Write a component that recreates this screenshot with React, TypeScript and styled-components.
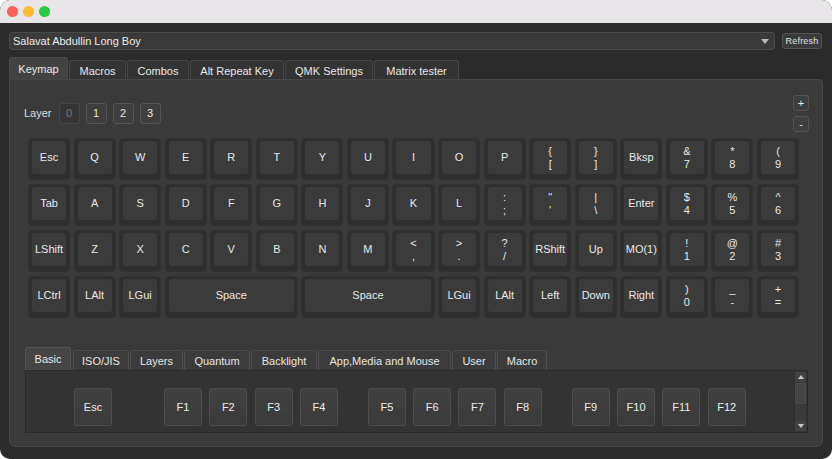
import React from "react";
import styled, { createGlobalStyle } from "styled-components";

const Global = createGlobalStyle`
  html, body { margin: 0; padding: 0; background: #ffffff; }
  body { font-family: "Liberation Sans", Arial, sans-serif; }
  #root { width: 832px; height: 459px; }
  * { box-sizing: border-box; }
`;

const Window = styled.div`
  width: 832px;
  height: 459px;
  border-radius: 10px;
  overflow: hidden;
  background: #2b2b2b;
  display: flex;
  flex-direction: column;
  color: #e6e6e6;
  font-size: 11px;
`;

const TitleBar = styled.div`
  height: 23px;
  flex: none;
  background: #e8e6e8;
  display: flex;
  align-items: center;
  gap: 5px;
  padding-left: 7px;
  padding-bottom: 1px;
`;

const Light = styled.span<{ $c: string }>`
  width: 11px;
  height: 11px;
  border-radius: 50%;
  background: ${(p) => p.$c};
`;

const Body = styled.div`
  flex: 1;
  display: flex;
  flex-direction: column;
  padding: 9px 9px 12px 9px;
  min-height: 0;
`;

const TopRow = styled.div`
  display: flex;
  align-items: center;
  gap: 7px;
  height: 18px;
  flex: none;
`;

const Combo = styled.div`
  flex: 1;
  height: 18px;
  background: #3a3a3a;
  border: 1px solid #4c4c4c;
  border-radius: 3px;
  display: flex;
  align-items: center;
  justify-content: space-between;
  padding: 0 4px 0 3px;
  font-size: 11px;
  color: #ececec;
`;

const Caret = styled.span`
  width: 0;
  height: 0;
  border-left: 4px solid transparent;
  border-right: 4px solid transparent;
  border-top: 5px solid #b8b8b8;
  margin-right: 1px;
`;

const SmallButton = styled.div`
  width: 40px;
  height: 16px;
  margin-right: 1px;
  background: #3b3b3b;
  border: 1px solid #555;
  border-radius: 3px;
  font-size: 9px;
  display: flex;
  align-items: center;
  justify-content: center;
  color: #e2e2e2;
  letter-spacing: 0.2px;
`;

const TabBar = styled.div`
  display: flex;
  align-items: flex-end;
  height: 22px;
  margin-top: 7px;
  flex: none;
`;

const Tab = styled.div<{ $w: number; $active?: boolean }>`
  width: ${(p) => p.$w}px;
  height: ${(p) => (p.$active ? 22 : 19)}px;
  margin-right: 1px;
  background: ${(p) => (p.$active ? "#424242" : "#333333")};
  border: 1px solid ${(p) => (p.$active ? "#4a4a4a" : "#474747")};
  border-bottom: none;
  border-radius: 3px 3px 0 0;
  display: flex;
  align-items: center;
  justify-content: center;
  font-size: 11px;
  color: #e8e8e8;
  padding-top: ${(p) => (p.$active ? 0 : 1)}px;
`;

const Pane = styled.div`
  flex: 1;
  background: #3a3a3a;
  border: 1px solid #474747;
  border-radius: 0 4px 6px 6px;
  display: flex;
  flex-direction: column;
  padding: 15px 14px 13px 14px;
  min-height: 0;
`;

const Header = styled.div`
  display: flex;
  align-items: center;
  justify-content: space-between;
  height: 37px;
`;

const LayerRow = styled.div`
  display: flex;
  align-items: center;
  gap: 6px;
  margin-top: -1px;
`;

const LayerLabel = styled.span`
  font-size: 11px;
  color: #dcdcdc;
  margin-right: 1px;
`;

const LayerButton = styled.div<{ $current?: boolean }>`
  width: 21px;
  height: 21px;
  border-radius: 3px;
  background: ${(p) => (p.$current ? "#353535" : "#3e3e3e")};
  border: 1px solid ${(p) => (p.$current ? "#474747" : "#555555")};
  color: ${(p) => (p.$current ? "#7a7a7a" : "#e6e6e6")};
  display: flex;
  align-items: center;
  justify-content: center;
  font-size: 11px;
`;

const SizeColumn = styled.div`
  display: flex;
  flex-direction: column;
  gap: 5px;
  margin-right: -1px;
`;

const SizeButton = styled.div`
  width: 16px;
  height: 16px;
  border-radius: 3px;
  background: #3e3e3e;
  border: 1px solid #555;
  display: flex;
  align-items: center;
  justify-content: center;
  font-size: 11px;
  color: #e6e6e6;
  line-height: 1;
`;

const Keyboard = styled.div`
  margin: 6px 0 0 4px;
  width: 771px;
  display: grid;
  grid-template-columns: repeat(17, 1fr);
  grid-auto-rows: 42px;
  column-gap: 3.56px;
  row-gap: 4px;
`;

const KeyCap = styled.div<{ $span: number }>`
  grid-column: span ${(p) => p.$span};
  background: #2e2e2e;
  border: 1px solid #313131;
  border-radius: 4px;
  padding: 2px 3px 5px 3px;
  display: flex;
`;

const KeyFace = styled.div`
  flex: 1;
  background: #3b3b3b;
  border-radius: 3px;
  display: flex;
  flex-direction: column;
  align-items: center;
  justify-content: center;
  font-size: 11px;
  line-height: 13px;
  color: #e9e9e9;
  white-space: pre;
  text-align: center;
`;

const Lower = styled.div`
  margin: 29px 0 0 1px;
  display: flex;
  flex-direction: column;
  flex: 1;
  min-height: 0;
`;

const LowerTabBar = styled.div`
  display: flex;
  align-items: flex-end;
  height: 23px;
  flex: none;
`;

const LowerTab = styled.div<{ $w: number; $active?: boolean }>`
  width: ${(p) => p.$w}px;
  height: ${(p) => (p.$active ? 23 : 20)}px;
  margin-right: ${(p) => (p.$active ? 2 : 1)}px;
  background: ${(p) => (p.$active ? "#454545" : "#3b3b3b")};
  border: 1px solid ${(p) => (p.$active ? "#555555" : "#4e4e4e")};
  border-bottom: none;
  border-radius: 3px 3px 0 0;
  display: flex;
  align-items: center;
  justify-content: center;
  font-size: 11px;
  color: #e6e6e6;
`;

const LowerPane = styled.div`
  height: 63px;
  flex: none;
  background: #333333;
  border: 1px solid #2a2a2a;
  display: flex;
`;

const LowerKeys = styled.div`
  flex: 1;
  display: flex;
  align-items: flex-start;
  gap: 30px;
  padding: 17px 0 0 48px;
`;

const KeyGroup = styled.div<{ $after?: number }>`
  display: flex;
  gap: 7.3px;
  margin-right: ${(p) => p.$after ?? 0}px;
`;

const PickKey = styled.div`
  width: 38px;
  height: 38px;
  border-radius: 3px;
  background: linear-gradient(#414141, #3a3a3a);
  border: 1px solid #4e4e4e;
  display: flex;
  align-items: center;
  justify-content: center;
  font-size: 11px;
  color: #ececec;
`;

const ScrollBar = styled.div`
  width: 12px;
  margin: 1px 1px 1px 0;
  display: flex;
  flex-direction: column;
  background: #3a3a3a;
  border-left: 1px solid #2e2e2e;
`;

const ScrollArrow = styled.div<{ $down?: boolean }>`
  height: 10px;
  display: flex;
  align-items: center;
  justify-content: center;
  background: #424242;
  &::after {
    content: "";
    width: 0;
    height: 0;
    border-left: 3px solid transparent;
    border-right: 3px solid transparent;
    ${(p) =>
      p.$down
        ? "border-top: 4px solid #c8c8c8;"
        : "border-bottom: 4px solid #c8c8c8;"}
  }
`;

const ScrollThumb = styled.div`
  height: 21px;
  margin: 1px 0;
  background: #444444;
  border: 1px solid #4c4c4c;
  border-radius: 1px;
`;

const ScrollTrack = styled.div`
  flex: 1;
`;

type Key = { label: string; span?: number };

const k = (label: string, span = 1): Key => ({ label, span });

const rows: Key[][] = [
  ["Esc", "Q", "W", "E", "R", "T", "Y", "U", "I", "O", "P", "{\n[", "}\n]", "Bksp", "&\n7", "*\n8", "(\n9"].map((l) => k(l)),
  ["Tab", "A", "S", "D", "F", "G", "H", "J", "K", "L", ":\n;", "\"\n'", "|\n\\", "Enter", "$\n4", "%\n5", "^\n6"].map((l) => k(l)),
  ["LShift", "Z", "X", "C", "V", "B", "N", "M", "<\n,", ">\n.", "?\n/", "RShift", "Up", "MO(1)", "!\n1", "@\n2", "#\n3"].map((l) => k(l)),
  [
    k("LCtrl"), k("LAlt"), k("LGui"), k("Space", 3), k("Space", 3), k("LGui"), k("LAlt"),
    k("Left"), k("Down"), k("Right"), k(")\n0"), k("_\n-"), k("+\n="),
  ],
];

const topTabs: [string, number][] = [
  ["Keymap", 59], ["Macros", 57], ["Combos", 62], ["Alt Repeat Key", 94], ["QMK Settings", 88], ["Matrix tester", 85],
];

const lowerTabs: [string, number][] = [
  ["Basic", 46], ["ISO/JIS", 56], ["Layers", 53], ["Quantum", 66], ["Backlight", 66],
  ["App,Media and Mouse", 133], ["User", 44], ["Macro", 50],
];

const fGroups = [["F1", "F2", "F3", "F4"], ["F5", "F6", "F7", "F8"], ["F9", "F10", "F11", "F12"]];

export default function App() {
  return (
    <>
      <Global />
      <Window>
        <TitleBar>
          <Light $c="#fe5f57" />
          <Light $c="#febc2e" />
          <Light $c="#28c840" />
        </TitleBar>
        <Body>
          <TopRow>
            <Combo>
              <span>Salavat Abdullin Long Boy</span>
              <Caret />
            </Combo>
            <SmallButton>Refresh</SmallButton>
          </TopRow>
          <TabBar>
            {topTabs.map(([t, w], i) => (
              <Tab key={t} $w={w} $active={i === 0}>
                {t}
              </Tab>
            ))}
          </TabBar>
          <Pane>
            <Header>
              <LayerRow>
                <LayerLabel>Layer</LayerLabel>
                {["0", "1", "2", "3"].map((n, i) => (
                  <LayerButton key={n} $current={i === 0}>
                    {n}
                  </LayerButton>
                ))}
              </LayerRow>
              <SizeColumn>
                <SizeButton>+</SizeButton>
                <SizeButton>-</SizeButton>
              </SizeColumn>
            </Header>
            <Keyboard>
              {rows.flatMap((row, r) =>
                row.map((key, c) => (
                  <KeyCap key={`${r}-${c}`} $span={key.span ?? 1}>
                    <KeyFace>{key.label}</KeyFace>
                  </KeyCap>
                ))
              )}
            </Keyboard>
            <Lower>
              <LowerTabBar>
                {lowerTabs.map(([t, w], i) => (
                  <LowerTab key={t} $w={w} $active={i === 0}>
                    {t}
                  </LowerTab>
                ))}
              </LowerTabBar>
              <LowerPane>
                <LowerKeys>
                  <KeyGroup $after={22}>
                    <PickKey>Esc</PickKey>
                  </KeyGroup>
                  {fGroups.map((g) => (
                    <KeyGroup key={g[0]}>
                      {g.map((f) => (
                        <PickKey key={f}>{f}</PickKey>
                      ))}
                    </KeyGroup>
                  ))}
                </LowerKeys>
                <ScrollBar>
                  <ScrollArrow />
                  <ScrollThumb />
                  <ScrollTrack />
                  <ScrollArrow $down />
                </ScrollBar>
              </LowerPane>
            </Lower>
          </Pane>
        </Body>
      </Window>
    </>
  );
}
